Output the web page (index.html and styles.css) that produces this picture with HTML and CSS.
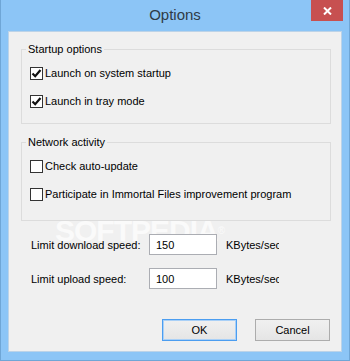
FILE: index.html
```html
<!DOCTYPE html>
<html lang="en">

<head>
    <meta charset="UTF-8">
    <meta name="viewport" content="width=device-width, initial-scale=1.0">
    <title>Options</title>
    <link rel="stylesheet" href="styles.css">
</head>

<body>
    <div class="window">
        <div class="titlebar">
            <span class="title">Options</span>
            <div class="close">
                <svg width="9" height="8" viewBox="0 0 9 8">
                    <path d="M1 0.5 L8 7.5 M8 0.5 L1 7.5" stroke="#fff" stroke-width="2" fill="none"/>
                </svg>
            </div>
        </div>
        <div class="client">
            <fieldset class="group group-startup">
                <legend>Startup options</legend>
                <label class="check">
                    <span class="box"><svg width="11" height="11" viewBox="0 0 11 11"><path d="M1.5 5.5 L4.2 8.2 L9.5 2" stroke="#111" stroke-width="2.2" fill="none"/></svg></span>
                    Launch on system startup
                </label>
                <label class="check">
                    <span class="box"><svg width="11" height="11" viewBox="0 0 11 11"><path d="M1.5 5.5 L4.2 8.2 L9.5 2" stroke="#111" stroke-width="2.2" fill="none"/></svg></span>
                    Launch in tray mode
                </label>
            </fieldset>
            <fieldset class="group group-network">
                <legend>Network activity</legend>
                <label class="check"><span class="box"></span>Check auto-update</label>
                <label class="check"><span class="box"></span>Participate in Immortal Files improvement program</label>
            </fieldset>
            <div class="speed-row">
                <span class="speed-label">Limit download speed:</span>
                <input class="speed-input" type="text" value="150">
                <span class="unit">KBytes/sec</span>
            </div>
            <div class="speed-row">
                <span class="speed-label">Limit upload speed:</span>
                <input class="speed-input" type="text" value="100">
                <span class="unit">KBytes/sec</span>
            </div>
            <div class="buttons">
                <button class="btn btn-default">OK</button>
                <button class="btn">Cancel</button>
            </div>
            <span class="watermark">SOFTPEDIA<sup>®</sup></span>
        </div>
    </div>
</body>

</html>
```

FILE: styles.css
```css
body {
    margin: 0;
    font-family: "Liberation Sans", Arial, sans-serif;
    font-size: 11px;
    color: #000;
}

.window {
    width: 350px;
    height: 361px;
    box-sizing: border-box;
    background: #8cc5f6;
    border: 1px solid #6fa6d6;
    border-top: none;
}

.titlebar {
    height: 31px;
    display: grid;
    grid-template-columns: 1fr auto 1fr;
}

.title {
    grid-column: 2;
    font-size: 15px;
    line-height: 18px;
    padding-top: 6px;
    color: #2f3b47;
}

.close {
    grid-column: 3;
    justify-self: end;
    align-self: start;
    width: 32px;
    height: 21px;
    margin-right: 6px;
    background: #c75050;
    display: flex;
    justify-content: center;
    align-items: center;
}

.client {
    position: relative;
    z-index: 0;
    height: 321px;
    margin: 0 7px;
    box-sizing: border-box;
    background: #f0f0f0;
    border: 1px solid #bcd3e8;
    padding-top: 11px;
    overflow: hidden;
}

.group {
    width: 310px;
    box-sizing: border-box;
    margin: 0 0 0 12px;
    border: 1px solid #dcdcdc;
    padding: 11px 0 15px 4px;
}

.group legend {
    padding: 0 2px;
    line-height: 13px;
}

.group-network {
    margin-top: 12px;
    padding-bottom: 19px;
}

.check {
    display: flex;
    align-items: center;
    height: 13px;
    line-height: 13px;
    margin-left: 4px;
    gap: 2px;
}

.check + .check {
    margin-top: 15px;
}

.box {
    width: 13px;
    height: 13px;
    box-sizing: border-box;
    border: 1px solid #333;
    background: #fff;
    display: flex;
    justify-content: center;
    align-items: center;
}

.speed-row {
    display: flex;
    align-items: center;
    margin-top: 13px;
    padding-left: 22px;
}

.speed-label {
    width: 118px;
}

.speed-input {
    width: 68px;
    height: 21px;
    box-sizing: border-box;
    border: 1px solid #abadb3;
    background: #fff;
    padding: 0 0 0 6px;
    margin: 0;
    font-family: inherit;
    font-size: 11px;
    color: #000;
    outline: none;
}

.unit {
    margin-left: 9px;
    width: 53px;
    overflow: hidden;
    white-space: nowrap;
}

.buttons {
    display: flex;
    justify-content: flex-end;
    gap: 18px;
    margin-top: 30px;
    padding-right: 11px;
}

.btn {
    width: 75px;
    height: 22px;
    box-sizing: border-box;
    border: 1px solid #acacac;
    background: linear-gradient(#f0f0f0, #e5e5e5);
    font-family: inherit;
    font-size: 11px;
    color: #000;
    padding: 0;
    margin: 0;
}

.btn-default {
    border-color: #4b9df0;
    box-shadow: inset 0 0 0 1px #a9d0f7;
}

.watermark {
    position: absolute;
    z-index: -1;
    left: 46px;
    top: 184px;
    font-size: 30px;
    line-height: 30px;
    font-weight: bold;
    letter-spacing: -1px;
    color: rgba(255, 255, 255, 0.7);
    pointer-events: none;
}

.watermark sup {
    font-size: 10px;
    font-weight: normal;
    vertical-align: top;
}
```
